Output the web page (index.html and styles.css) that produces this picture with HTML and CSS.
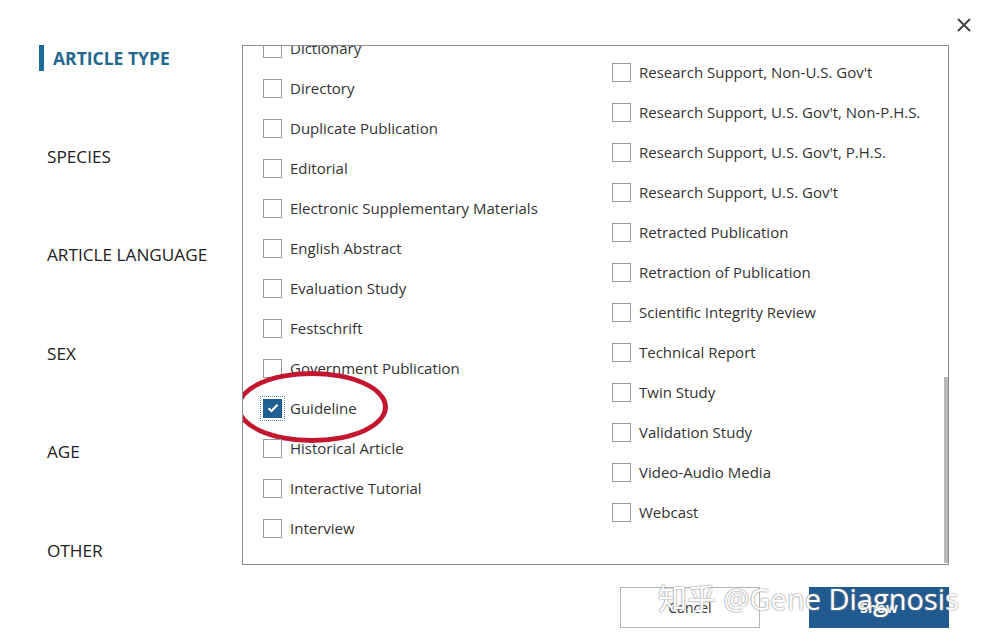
FILE: index.html
```html
<!DOCTYPE html>
<html lang="en">
<head>
  <meta charset="UTF-8" />
  <meta name="viewport" content="width=device-width, initial-scale=1.0" />
  <title>Additional filters</title>
  <link rel="stylesheet" href="styles.css">
</head>
<body>
  <div class="dialog">
    <button class="close" aria-label="Close">
      <svg width="16" height="16" viewBox="0 0 16 16"><path d="M2 2L14 14M14 2L2 14" stroke="#444" stroke-width="2" fill="none"/></svg>
    </button>

    <div class="main">
      <ul class="nav">
        <li class="active">ARTICLE TYPE</li>
        <li>SPECIES</li>
        <li>ARTICLE LANGUAGE</li>
        <li>SEX</li>
        <li>AGE</li>
        <li>OTHER</li>
      </ul>

      <div class="panel">
        <div class="col col-left">
          <label class="opt"><span class="box"></span>Dictionary</label>
          <label class="opt"><span class="box"></span>Directory</label>
          <label class="opt"><span class="box"></span>Duplicate Publication</label>
          <label class="opt"><span class="box"></span>Editorial</label>
          <label class="opt"><span class="box"></span>Electronic Supplementary Materials</label>
          <label class="opt"><span class="box"></span>English Abstract</label>
          <label class="opt"><span class="box"></span>Evaluation Study</label>
          <label class="opt"><span class="box"></span>Festschrift</label>
          <label class="opt"><span class="box"></span>Government Publication</label>
          <label class="opt checked"><span class="box">
            <svg width="12" height="10" viewBox="0 0 12 10"><path d="M1.5 5.2L4.5 8L10.5 1.8" stroke="#fff" stroke-width="2.2" fill="none"/></svg>
          </span>Guideline<span class="ring"></span></label>
          <label class="opt"><span class="box"></span>Historical Article</label>
          <label class="opt"><span class="box"></span>Interactive Tutorial</label>
          <label class="opt"><span class="box"></span>Interview</label>
        </div>
        <div class="col col-right">
          <label class="opt"><span class="box"></span>Research Support, Non-U.S. Gov't</label>
          <label class="opt"><span class="box"></span>Research Support, U.S. Gov't, Non-P.H.S.</label>
          <label class="opt"><span class="box"></span>Research Support, U.S. Gov't, P.H.S.</label>
          <label class="opt"><span class="box"></span>Research Support, U.S. Gov't</label>
          <label class="opt"><span class="box"></span>Retracted Publication</label>
          <label class="opt"><span class="box"></span>Retraction of Publication</label>
          <label class="opt"><span class="box"></span>Scientific Integrity Review</label>
          <label class="opt"><span class="box"></span>Technical Report</label>
          <label class="opt"><span class="box"></span>Twin Study</label>
          <label class="opt"><span class="box"></span>Validation Study</label>
          <label class="opt"><span class="box"></span>Video-Audio Media</label>
          <label class="opt"><span class="box"></span>Webcast</label>
        </div>
        <div class="thumb"></div>
      </div>
    </div>

    <div class="actions">
      <button class="btn btn-cancel">Cancel</button>
      <button class="btn btn-show">Show</button>
      <div class="watermark">知乎 @Gene Diagnosis</div>
    </div>
  </div>
</body>
</html>
```

FILE: styles.css
```css
body {
  margin: 0;
  background: #fff;
  font-family: "Open Sans", "Noto Sans", Arial, sans-serif;
  color: #333;
}

.dialog {
  position: relative;
  width: 984px;
  height: 643px;
  padding-top: 45px;
  box-sizing: border-box;
  overflow: hidden;
}

.close {
  position: absolute;
  top: 17px;
  left: 956px;
  padding: 0;
  border: none;
  background: none;
  cursor: pointer;
}

.main {
  display: flex;
  align-items: flex-start;
  padding-left: 39px;
}

.nav {
  list-style: none;
  margin: 0;
  padding: 0;
  width: 203px;
}

.nav li {
  height: 98.6px;
  line-height: 26px;
  padding-left: 8px;
  font-size: 17.2px;
  color: #222;
}

.nav li:last-child {
  height: 26px;
}

.nav li.active {
  border-left: 5px solid #1f6b98;
  padding-left: 9px;
  height: 26px;
  margin-bottom: 72.6px;
  color: #23688f;
  font-weight: bold;
  font-size: 17.5px;
}

.panel {
  position: relative;
  width: 685px;
  height: 518px;
  border: 1px solid #8c8c8c;
  overflow: hidden;
  display: flex;
  padding-left: 20px;
}

.col {
  width: 349px;
  flex-shrink: 0;
  display: flex;
  flex-direction: column;
}

.col-left {
  margin-top: -18px;
}

.col-right {
  margin-top: 6px;
}

.opt {
  position: relative;
  display: flex;
  align-items: center;
  height: 40px;
  flex-shrink: 0;
  font-size: 15px;
  color: #333;
  white-space: nowrap;
}

.box {
  width: 17px;
  height: 17px;
  border: 1px solid #9a9a9a;
  margin-right: 8px;
  display: flex;
  align-items: center;
  justify-content: center;
  background: #fff;
}

.checked .box {
  background: #1f5f94;
  border-color: #1f5f94;
  outline: 1px dotted #5b88b8;
  outline-offset: 2px;
}

.ring {
  position: absolute;
  left: -27px;
  top: -17px;
  width: 142px;
  height: 62px;
  border: 5.5px solid #c4162e;
  border-radius: 50%;
}

.thumb {
  position: absolute;
  right: 0;
  top: 331px;
  width: 4px;
  height: 186px;
  background: #b9b9b9;
}

.actions {
  position: relative;
  display: flex;
  justify-content: flex-end;
  gap: 49px;
  width: 949px;
  margin-top: 22px;
}

.btn {
  width: 140px;
  height: 41px;
  font-family: "Open Sans", Arial, sans-serif;
  font-size: 14px;
  cursor: pointer;
}

.btn-cancel {
  background: #fff;
  border: 1px solid #b5b5b5;
  color: #333;
}

.btn-show {
  background: #205a91;
  border: none;
  color: #fff;
  font-weight: bold;
}

.watermark {
  position: absolute;
  left: 658px;
  top: -11px;
  font-family: "Open Sans", "Noto Sans CJK SC", sans-serif;
  font-size: 29px;
  color: #fff;
  white-space: nowrap;
  text-shadow: 0 0 1px #777, 0 0 2px #999;
}
```
